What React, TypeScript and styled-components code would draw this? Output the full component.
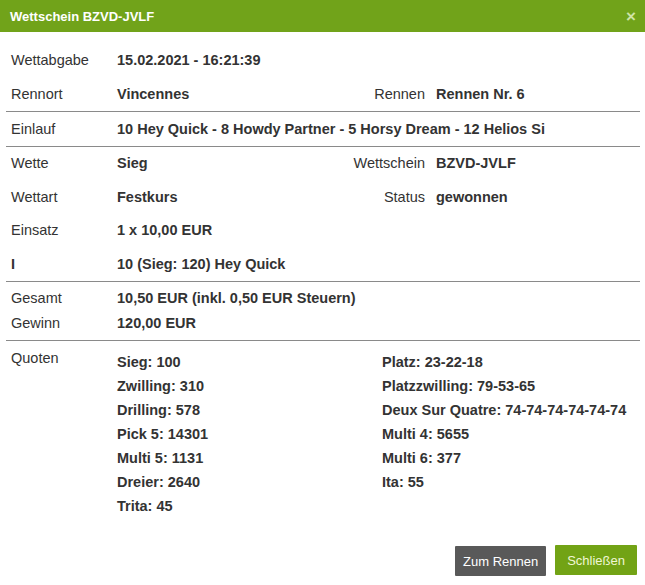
import styled, { createGlobalStyle } from 'styled-components';

const GlobalStyle = createGlobalStyle`
  html, body {
    margin: 0;
    padding: 0;
    background: #ffffff;
  }
  body {
    font-family: "Liberation Sans", Arial, sans-serif;
    font-size: 14.5px;
    color: #333333;
  }
`;

type Row = {
  label: string;
  value: string;
  strongLabel?: boolean;
  rightLabel?: string;
  rightValue?: string;
};

const topRows: Row[] = [
  { label: 'Wettabgabe', value: '15.02.2021 - 16:21:39' },
  { label: 'Rennort', value: 'Vincennes', rightLabel: 'Rennen', rightValue: 'Rennen Nr. 6' },
];

const betRows: Row[] = [
  { label: 'Wette', value: 'Sieg', rightLabel: 'Wettschein', rightValue: 'BZVD-JVLF' },
  { label: 'Wettart', value: 'Festkurs', rightLabel: 'Status', rightValue: 'gewonnen' },
  { label: 'Einsatz', value: '1 x 10,00 EUR' },
  { label: 'I', value: '10 (Sieg: 120) Hey Quick', strongLabel: true },
];

const leftQuotes = ['Sieg: 100', 'Zwilling: 310', 'Drilling: 578', 'Pick 5: 14301', 'Multi 5: 1131', 'Dreier: 2640', 'Trita: 45'];
const rightQuotes = ['Platz: 23-22-18', 'Platzzwilling: 79-53-65', 'Deux Sur Quatre: 74-74-74-74-74-74', 'Multi 4: 5655', 'Multi 6: 377', 'Ita: 55'];

const DetailRow = ({ row, $compact }: { row: Row; $compact?: boolean }) => (
  <RowLine $compact={$compact}>
    <Label $strong={row.strongLabel}>{row.label}</Label>
    <Value>{row.value}</Value>
    {row.rightLabel && (
      <>
        <RightLabel>{row.rightLabel}</RightLabel>
        <RightValue>{row.rightValue}</RightValue>
      </>
    )}
  </RowLine>
);

const App = () => {
  return (
    <>
      <GlobalStyle />
      <Modal>
        <Header>
          <Title>Wettschein BZVD-JVLF</Title>
          <Close>×</Close>
        </Header>
        <Body>
          <Section $divider>
            {topRows.map((r) => (
              <DetailRow key={r.label} row={r} />
            ))}
          </Section>
          <Section $divider>
            <DetailRow row={{ label: 'Einlauf', value: '10 Hey Quick - 8 Howdy Partner - 5 Horsy Dream - 12 Helios Si' }} />
          </Section>
          <Section $divider>
            {betRows.map((r) => (
              <DetailRow key={r.label} row={r} $compact />
            ))}
          </Section>
          <Section $divider>
            <TightRow>
              <Label>Gesamt</Label>
              <Value>10,50 EUR (inkl. 0,50 EUR Steuern)</Value>
            </TightRow>
            <TightRow $last>
              <Label>Gewinn</Label>
              <Value>120,00 EUR</Value>
            </TightRow>
          </Section>
          <Section>
            <RowLine>
              <Label>Quoten</Label>
              <QuoteGrid>
                <QuoteCol>
                  {leftQuotes.map((q) => (
                    <Quote key={q}>{q}</Quote>
                  ))}
                </QuoteCol>
                <QuoteCol>
                  {rightQuotes.map((q) => (
                    <Quote key={q}>{q}</Quote>
                  ))}
                </QuoteCol>
              </QuoteGrid>
            </RowLine>
          </Section>
        </Body>
        <Footer>
          <Button $variant="dark">Zum Rennen</Button>
          <Button $variant="green">Schließen</Button>
        </Footer>
      </Modal>
    </>
  );
};

export default App;

const Modal = styled.div`
  width: 645px;
  height: 585px;
  background: #ffffff;
  display: flex;
  flex-direction: column;
`;

const Header = styled.div`
  height: 32px;
  background: #71a31a;
  display: flex;
  align-items: center;
  justify-content: space-between;
  padding: 0 10px;
  box-sizing: border-box;
`;

const Title = styled.div`
  color: #ffffff;
  font-weight: bold;
  font-size: 13px;
`;

const Close = styled.div`
  color: #cfe3a8;
  font-weight: bold;
  font-size: 17px;
  margin-top: 2px;
  margin-right: -1px;
`;

const Body = styled.div`
  padding: 11px 5px 0 6px;
`;

const Section = styled.div<{ $divider?: boolean }>`
  border-bottom: ${(p) => (p.$divider ? '1px solid #8a8a8a' : 'none')};
`;

const RowLine = styled.div<{ $compact?: boolean }>`
  display: flex;
  align-items: flex-start;
  padding: 8px 0 8px 5px;
  line-height: ${(p) => (p.$compact ? '17.5px' : '18px')};
`;

const TightRow = styled.div<{ $last?: boolean }>`
  display: flex;
  padding: 7px 0 ${(p) => (p.$last ? '8px' : '0')} 5px;
  line-height: 18px;
`;

const Label = styled.div<{ $strong?: boolean }>`
  width: 106px;
  flex-shrink: 0;
  font-weight: ${(p) => (p.$strong ? 'bold' : 'normal')};
`;

const Value = styled.div`
  flex: 1;
  font-weight: bold;
  white-space: nowrap;
`;

const RightLabel = styled.div`
  width: 120px;
  text-align: right;
  padding-right: 11px;
`;

const RightValue = styled.div`
  width: 204px;
  font-weight: bold;
`;

const QuoteGrid = styled.div`
  flex: 1;
  display: grid;
  grid-template-columns: 265px 1fr;
  margin-top: 1px;
`;

const QuoteCol = styled.div`
  display: flex;
  flex-direction: column;
`;

const Quote = styled.div`
  font-weight: bold;
  line-height: 24px;
  white-space: nowrap;
`;

const Footer = styled.div`
  margin-top: auto;
  display: flex;
  justify-content: flex-end;
  gap: 9px;
  padding: 0 8px 9px 0;
`;

const Button = styled.button<{ $variant: 'dark' | 'green' }>`
  height: 30px;
  border: none;
  border-radius: 1px;
  font-family: "Liberation Sans", Arial, sans-serif;
  font-size: 13px;
  padding: 0 ${(p) => (p.$variant === 'dark' ? '8px' : '12px')};
  background: ${(p) => (p.$variant === 'dark' ? '#595959' : '#72a315')};
  color: ${(p) => (p.$variant === 'dark' ? '#ffffff' : '#f0f7d4')};
  margin-top: ${(p) => (p.$variant === 'dark' ? '1px' : '0')};
`;
